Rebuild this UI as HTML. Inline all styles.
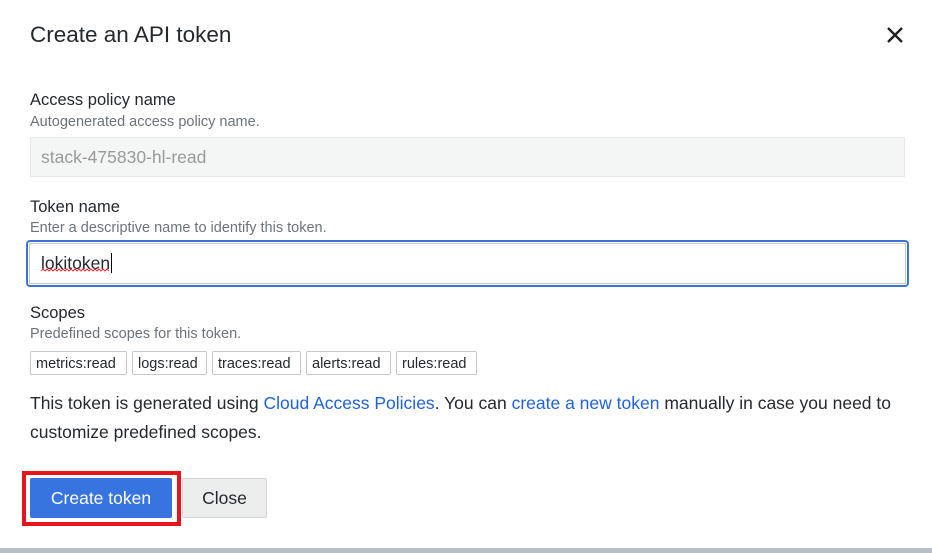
<!DOCTYPE html>
<html><head><style>
body{margin:0;width:932px;height:553px;background:#fff;font-family:"Liberation Sans",sans-serif;position:relative;overflow:hidden;color:#24292e}
.a{position:absolute}
.t{font-size:16.5px;color:#24292e}
.s{font-size:14.5px;color:#6c737a}
.tag{position:absolute;top:351px;height:24px;border:1px solid #c7c7c7;border-radius:2px;font-size:14.5px;line-height:24px;padding:0 5px;box-sizing:border-box;color:#24292e;white-space:nowrap;overflow:hidden}
a{color:#1f62e0;text-decoration:none}
</style></head><body>
<div class="a" style="left:30px;top:22px;font-size:22.5px;color:#24292e">Create an API token</div>
<svg class="a" style="left:886px;top:26px" width="18" height="18"><path d="M2 2L16 16M16 2L2 16" stroke="#222" stroke-width="2.4"/></svg>
<div class="a t" style="left:30px;top:91px">Access policy name</div>
<div class="a s" style="left:30px;top:114px">Autogenerated access policy name.</div>
<div class="a" style="left:30px;top:137px;width:875px;height:40px;background:#f4f5f5;border:1px solid #e8e8e8;box-sizing:border-box;font-size:17.5px;color:#9a9a9a;line-height:38px;padding-left:10px">stack-475830-hl-read</div>
<div class="a t" style="left:30px;top:198px">Token name</div>
<div class="a s" style="left:30px;top:220px">Enter a descriptive name to identify this token.</div>
<div class="a" style="left:26px;top:240px;width:883px;height:47px;border:2px solid #3b73d9;border-radius:4px;box-sizing:border-box"></div>
<div class="a" style="left:29px;top:243px;width:877px;height:41px;border:1px solid #c7c7c7;box-sizing:border-box;font-size:17.5px;line-height:39px;padding-left:11px">lokitoken<span style="border-left:1px solid #000;margin-left:1px"></span></div>
<svg class="a" style="left:41px;top:268px" width="70" height="4"><path d="M0 3 l2 -2 l2 2 l2 -2 l2 2 l2 -2 l2 2 l2 -2 l2 2 l2 -2 l2 2 l2 -2 l2 2 l2 -2 l2 2 l2 -2 l2 2 l2 -2 l2 2 l2 -2 l2 2 l2 -2 l2 2 l2 -2 l2 2 l2 -2 l2 2 l2 -2 l2 2 l2 -2 l2 2 l2 -2 l2 2 l2 -2 l2 2" stroke="#e33" fill="none" stroke-width="1"/></svg>
<div class="a t" style="left:30px;top:304px">Scopes</div>
<div class="a s" style="left:30px;top:326px">Predefined scopes for this token.</div>
<div class="tag" style="left:30px;width:97px">metrics:read</div>
<div class="tag" style="left:132px;width:75px">logs:read</div>
<div class="tag" style="left:212px;width:89px">traces:read</div>
<div class="tag" style="left:306px;width:85px">alerts:read</div>
<div class="tag" style="left:396px;width:81px">rules:read</div>
<div class="a" style="left:30px;top:389px;width:875px;font-size:17.5px;line-height:29px;color:#24292e">This token is generated using <a>Cloud Access Policies</a>. You can <a>create a new token</a> manually in case you need to customize predefined scopes.</div>
<div class="a" style="left:22px;top:471px;width:159px;height:55px;border:4px solid #e8141c;box-sizing:border-box"></div>
<div class="a" style="left:30px;top:478px;width:142px;height:40px;background:#3874e0;border-radius:2px;color:#fff;font-size:17.5px;line-height:40px;text-align:center">Create token</div>
<div class="a" style="left:182px;top:478px;width:85px;height:40px;background:#eceeee;border:1px solid #d6d6d6;box-sizing:border-box;border-radius:2px;font-size:17.5px;line-height:38px;text-align:center;color:#24292e">Close</div>
<div class="a" style="left:0;top:548px;width:932px;height:5px;background:#b8bec8"></div>
</body></html>
